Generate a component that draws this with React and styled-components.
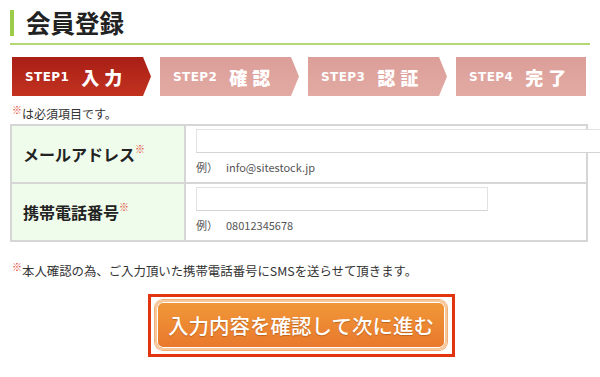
import React from "react";
import styled, { createGlobalStyle } from "styled-components";

const GlobalStyle = createGlobalStyle`
  body {
    margin: 0;
    background: #fff;
    font-family: "Noto Sans CJK JP", "Noto Sans", sans-serif;
    color: #333;
    overflow: hidden;
  }
`;

const steps = [
  { no: "STEP1", label: "入力", active: true, arrow: true },
  { no: "STEP2", label: "確認", arrow: true },
  { no: "STEP3", label: "認証", arrow: true },
  { no: "STEP4", label: "完了" },
];

const App = () => {
  return (
    <>
      <GlobalStyle />
      <Page>
        <Header>
          <Title>会員登録</Title>
        </Header>
        <Steps>
          {steps.map((s) => (
            <Step key={s.no} $active={s.active} $arrow={s.arrow}>
              <StepNo>{s.no}</StepNo>
              <StepLabel>{s.label}</StepLabel>
            </Step>
          ))}
        </Steps>
        <Required>
          <Mark>※</Mark>は必須項目です。
        </Required>
        <Table>
          <Row>
            <Label>
              メールアドレス<Mark>※</Mark>
            </Label>
            <Field>
              <Input $wide />
              <Example>
                <span>例）</span>info@sitestock.jp
              </Example>
            </Field>
          </Row>
          <Row>
            <Label>
              携帯電話番号<Mark>※</Mark>
            </Label>
            <Field>
              <Input />
              <Example>
                <span>例）</span>08012345678
              </Example>
            </Field>
          </Row>
        </Table>
        <Note>
          <Mark>※</Mark>本人確認の為、ご入力頂いた携帯電話番号にSMSを送らせて頂きます。
        </Note>
        <ButtonArea>
          <Focus>
            <Submit>入力内容を確認して次に進む</Submit>
          </Focus>
        </ButtonArea>
      </Page>
    </>
  );
};

export default App;

const Page = styled.div`
  width: 580px;
  padding: 10px 0 0 10px;
`;

const Header = styled.div`
  border-bottom: 2px solid #b4d873;
  padding-bottom: 7px;
`;

const Title = styled.h1`
  margin: 0;
  height: 26px;
  border-left: 4px solid #9ccc4a;
  padding-left: 12px;
  font-size: 24.5px;
  line-height: 26px;
  font-weight: 700;
  color: #222;
`;

const Steps = styled.div`
  display: flex;
  gap: 9px;
  margin: 12px 0 0 2px;
`;

const Step = styled.div`
  width: ${(p) => (p.$arrow ? "139px" : "130px")};
  height: 39px;
  box-sizing: border-box;
  display: flex;
  align-items: center;
  padding-left: 13px;
  gap: 12px;
  color: #fff;
  background: ${(p) =>
    p.$active
      ? "linear-gradient(#a91f16, #c2321f)"
      : "linear-gradient(#dc9e98, #e2aaa4)"};
  clip-path: ${(p) =>
    p.$arrow
      ? "polygon(0 0, 131px 0, 100% 50%, 131px 100%, 0 100%)"
      : "none"};
`;

const StepNo = styled.span`
  font-family: "DejaVu Sans", "Liberation Sans", sans-serif;
  font-weight: 700;
  font-size: 12px;
  letter-spacing: 0.4px;
`;

const StepLabel = styled.span`
  font-size: 18px;
  font-weight: 900;
  letter-spacing: 5px;
`;

const Mark = styled.span`
  color: #e03a2a;
  font-size: 10px;
  vertical-align: top;
  line-height: 1;
`;

const Required = styled.div`
  margin: 9px 0 0 2px;
  font-size: 12px;
  line-height: 18px;
  color: #333;
`;

const Table = styled.div`
  border: 2px solid #d6d6d6;
  margin-top: 1px;
  width: 578px;
  box-sizing: border-box;
`;

const Row = styled.div`
  display: flex;
  height: 56px;
  & + & {
    border-top: 2px solid #d6d6d6;
  }
`;

const Label = styled.div`
  flex: 0 0 174px;
  background: #effcec;
  border-right: 2px solid #d6d6d6;
  display: flex;
  align-items: center;
  padding-left: 11px;
  box-sizing: border-box;
  font-size: 16px;
  font-weight: 700;
  color: #222;
  white-space: nowrap;
  ${Mark} {
    margin-top: -10px;
  }
`;

const Field = styled.div`
  flex: 1;
  min-width: 0;
  padding: 3px 0 0 10px;
`;

const Input = styled.div`
  width: ${(p) => (p.$wide ? "430px" : "290px")};
  height: 22px;
  border: 1px solid #e2e2e2;
  border-bottom-color: #d4d4d4;
  background: #fff;
`;

const Example = styled.div`
  margin-top: 6px;
  font-size: 11px;
  color: #555;
  span {
    display: inline-block;
    width: 30px;
  }
`;

const Note = styled.div`
  margin: 20px 0 0 2px;
  font-size: 12.4px;
  line-height: 18px;
  color: #333;
`;

const ButtonArea = styled.div`
  display: flex;
  padding-left: 138px;
  margin-top: 14px;
`;

const Focus = styled.div`
  border: 3px solid #e2350f;
  padding: 3px 5px 4px 4px;
`;

const Submit = styled.button`
  width: 292px;
  height: 50px;
  border-radius: 8px;
  border: 2px solid #f8c79a;
  box-shadow: inset 0 0 0 1px #fff, 0 0 0 1px #f1b07a;
  background: linear-gradient(#f09838, #e9782d);
  color: #fff;
  font-family: "Noto Sans CJK JP", sans-serif;
  font-size: 20.5px;
  font-weight: 500;
  text-shadow: 0 1px 1px rgba(120, 50, 0, 0.4);
  padding: 0;
  cursor: pointer;
`;
